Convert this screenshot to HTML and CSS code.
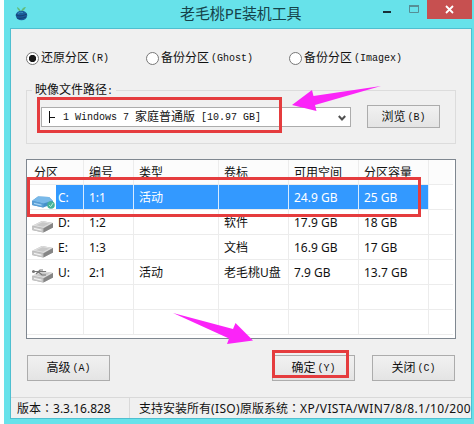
FILE: index.html
```html
<!DOCTYPE html>
<html lang="zh-CN">
<head>
<meta charset="utf-8">
<title>老毛桃PE装机工具</title>
<link rel="stylesheet" href="styles.css">
</head>
<body>
<svg class="defs" width="0" height="0">
  <defs>
    <symbol id="drive" viewBox="0 0 24 16">
      <path d="M1 8 11 3l11 2v4.500L12 14.500 1 12z" fill="#aaa"/>
      <path d="M1 7.800 11 3l11 2L12.500 10z" fill="#dedede"/>
      <path d="M5 7.200 11.500 4.200l7 1.300-6.300 3.200z" fill="#c8c8c8"/>
      <path d="M1 8 12.500 10.500v4L1 12z" fill="#c4c4c4"/>
      <path d="M3 9.800 10.500 11.500v1.200L3 11.100z" fill="#f2f2f2"/>
      <path d="M12.500 10.500 22 5v4.500l-9.500 5z" fill="#858585"/>
    </symbol>
    <symbol id="drive-sys" viewBox="0 0 24 16">
      <path d="M1 8 7 3.500l11 .5 4 4v3l-10 3.500L1 12z" fill="#4590ca"/>
      <path d="M1 7.800 7 3.500l11 .5 3.500 3.500-9 3z" fill="#79b9e9"/>
      <path d="M1 8 12.500 10.500v4L1 12z" fill="#5a9fd6"/>
      <path d="M3 9.800 10.500 11.500v1.200L3 11.100z" fill="#a8d6f5"/>
      <circle cx="20" cy="12" r="3.800" fill="#46b29a"/>
      <path d="m18.200 12.200 1.400 1.400 2.400-3.500" fill="none" stroke="#bdf0df"/>
    </symbol>
  </defs>
</svg>
<div class="window">
  <header class="titlebar">
    <svg class="logo" width="14" height="17" viewBox="0 0 14 17">
      <path d="M6 7Q5 3 2 2q0 3 4 5Q7 2 11 2 10 5 6 7z" fill="#62bd7c"/>
      <ellipse cx="6.500" cy="10.500" rx="5.700" ry="4.800" fill="#1b5d9b"/>
      <path d="M1 9.500q3 3 11-.5M2 13q4 1 9-1" fill="none" stroke="#164274" stroke-width="1.200"/>
      <path d="M3 8.500q2-2 5-1" fill="none" stroke="#3c91bf"/>
    </svg>
    <h1>老毛桃PE装机工具</h1>
    <div class="controls">
      <svg width="44" height="19" viewBox="0 0 44 19"><path d="M1 11h8v2H1z" fill="#172f38"/><path d="M27.500 5.500h9v7h-9z" fill="none" stroke="#568e95"/><path d="M27 5h10v2H27z" fill="#568e95"/></svg>
      <span class="close"><svg width="9" height="9" viewBox="0 0 9 9"><path d="m1 1 7 7M8 1 1 8" stroke="#fff" stroke-width="1.800"/></svg></span>
    </div>
  </header>
  <main class="client">
    <div class="modes">
      <label class="mode"><i class="radio on"></i>还原分区<span class="mono key">(R)</span></label>
      <label class="mode"><i class="radio"></i>备份分区<span class="mono key">(Ghost)</span></label>
      <label class="mode"><i class="radio"></i>备份分区<span class="mono key">(Imagex)</span></label>
    </div>
    <section class="group">
      <div class="legend">映像文件路径<span class="mono">:</span></div>
      <div class="combo"><span class="value"><b class="branch"></b><span class="mono">1 Windows 7 </span>家庭普通版<span class="mono"> [10.97 GB]</span></span>
        <svg class="chevron" width="8" height="7" viewBox="0 0 8 7"><path d="m.8 1 3.200 3.500L7.200 1" fill="none" stroke="#505050" stroke-width="2"/></svg></div>
      <div class="button browse">浏览<span class="mono key">(B)</span></div>
    </section>
    <div class="list">
      <div class="row head"><span>分区</span><span>编号</span><span>类型</span><span>卷标</span><span>可用空间</span><span>分区容量</span><span></span></div>
      <div class="row selected"><span><svg class="disk" width="24" height="16"><use href="#drive-sys"/></svg><em>C:</em></span><span>1:1</span><span>活动</span><span></span><span>24.9 GB</span><span>25 GB</span><span></span></div>
      <div class="row"><span><svg class="disk" width="24" height="16"><use href="#drive"/></svg><em>D:</em></span><span>1:2</span><span></span><span>软件</span><span>17.9 GB</span><span>18 GB</span><span></span></div>
      <div class="row"><span><svg class="disk" width="24" height="16"><use href="#drive"/></svg><em>E:</em></span><span>1:3</span><span></span><span>文档</span><span>16.9 GB</span><span>17 GB</span><span></span></div>
      <div class="row"><span><svg class="disk" width="24" height="16" viewBox="0 0 24 16"><use href="#drive" width="24" height="16"/><path d="M1 3.500h14M5 6l4-4h3M7 3.500 11 7h4" fill="none" stroke="#777" stroke-width="1.200"/><circle cx="2.500" cy="3.500" r="1.500" fill="#777"/></svg><em>U:</em></span><span>2:1</span><span>活动</span><span>老毛桃U盘</span><span>7.9 GB</span><span>13.7 GB</span><span></span></div>
      <div class="row"><span></span><span></span><span></span><span></span><span></span><span></span><span></span></div>
      <div class="row"><span></span><span></span><span></span><span></span><span></span><span></span><span></span></div>
    </div>
    <div class="actions">
      <div class="button">高级<span class="mono key">(A)</span></div>
      <div class="button ok">确定<span class="mono key">(Y)</span></div>
      <div class="button">关闭<span class="mono key">(C)</span></div>
    </div>
    <footer class="status"><span class="version">版本<span class="colon" lang="zh-TW">：</span>3.3.16.828</span><span class="support">支持安装所有<span class="latin">(ISO)</span>原版系统<span class="colon" lang="zh-TW">：</span><span class="latin">XP/VISTA/WIN7/8/8.1/10/200</span></span></footer>
  </main>
</div>
<svg class="marks" width="474" height="424" viewBox="0 0 474 424">
  <g fill="none" stroke="#e53c3e" stroke-width="3">
    <path d="M38.500 98.500h242v33h-242z"/>
    <path d="M28.500 178.500h391v37h-391z"/>
    <path d="M273.500 351.500h74v25h-74z"/>
  </g>
  <g fill="#fb24f8">
    <path d="M292 105 312 90 313.500 96 381 86 315 105 316.500 111z"/>
    <path d="M173 313 233 329 235.500 323 253 340.500 227 344 229 338.500z"/>
  </g>
</svg>
</body>
</html>
```

FILE: styles.css
```css
* { box-sizing: border-box; }
body {
  margin: 0;
  width: 474px;
  height: 424px;
  overflow: hidden;
  background: #fff;
  color: #111;
  font: 12px/16px "Noto Sans", "Noto Sans CJK SC", sans-serif;
}
.defs { position: absolute; }
.window {
  margin-left: 4px;
  height: 424px;
  padding: 0 2px 5px 6px;
  background: #67e2ea;
}
.titlebar { display: flex; height: 28px; }
.logo { margin: 5px 0 0 5px; flex: none; }
h1 {
  margin: 0 0 0 151px;
  width: 130px;
  font-size: 15px;
  line-height: 27px;
  font-weight: 400;
  letter-spacing: -0.1px;
  color: #15434a;
  white-space: nowrap;
}
.controls { display: flex; margin-left: auto; }
.close {
  display: flex;
  align-items: center;
  justify-content: center;
  width: 45px;
  height: 19px;
  margin-left: 1px;
  background: #c75050;
}
.client {
  display: flex;
  flex-direction: column;
  height: 391px;
  background: #f0f0f0;
  border: 1px solid #4fbfd0;
}
.mono { font: 10px/16px "Liberation Mono", monospace; white-space: pre; }
.mode .mono, .button .mono, .value .mono { margin-top: 2px; }
.key { margin-left: 2px; }
.modes { display: flex; height: 48px; padding: 21px 0 0 15px; }
.mode { display: flex; align-items: center; height: 16px; white-space: nowrap; }
.mode:nth-child(1) { width: 120px; }
.mode:nth-child(2) { width: 143px; }
.radio {
  width: 13px;
  height: 13px;
  margin-right: 2px;
  border: 1px solid #777;
  border-radius: 50%;
  background: #fff;
}
.radio.on { background: radial-gradient(circle, #181818 3.300px, #fff 4px); }
.group {
  display: flex;
  position: relative;
  margin: 13px 0 0 15px;
  width: 430px;
  height: 54px;
  padding: 14px 14px 0;
  border: 1px solid #dcdcdc;
}
.legend { position: absolute; left: 5px; top: -9px; padding: 0 3px; background: #f0f0f0; }
.combo {
  display: flex;
  align-items: center;
  justify-content: space-between;
  width: 310px;
  height: 20px;
  margin-top: 2px;
  padding: 0 4px 0 7px;
  border: 1px solid #acacac;
  background: #fff;
}
.value { display: flex; align-items: center; }
.chevron { margin-top: 2px; }
.branch {
  width: 6px;
  height: 12px;
  margin-right: 8px;
  border-left: 1px solid #111;
  background: linear-gradient(#111, #111) 0 6px / 6px 1px no-repeat;
}
.button {
  display: flex;
  align-items: center;
  justify-content: center;
  width: 83px;
  height: 26px;
  border: 1px solid #acacac;
  background: linear-gradient(#f1f1f1, #e4e4e4);
}
.browse { width: 73px; height: 23px; margin-left: auto; margin-right: 1px; }
.list {
  margin: 15px 0 0 15px;
  width: 430px;
  height: 180px;
  border: 1px solid #7f8790;
  background: #fff;
  overflow: hidden;
}
.row {
  display: grid;
  grid-template-columns: 57px 50px 85px 70px 70px 70px 24px;
  height: 25px;
}
.row span {
  display: flex;
  align-items: center;
  height: 25px;
  padding: 2px 0 0 5px;
  border-right: 1px solid #ececec;
  border-bottom: 1px solid #ececec;
  white-space: nowrap;
}
.row span:first-child { padding-left: 4px; }
.row span:last-child { border-right: 0; }
.row em { font-style: normal; margin-left: 3px; }
.disk { flex: none; margin-top: 6px; }
.head span { background: #fcfcfc; }
.row.head span:first-child { padding-left: 7px; }
.selected { color: #fff; }
.selected span:not(:last-child) { background: #3399ff; border-right-color: #d8ebff; }
.row.selected span:first-child { background: linear-gradient(90deg, #fff 29px, #3399ff 29px); }
.actions { display: flex; margin: 16px 0 0 16px; height: 26px; }
.ok { margin: 0 17px 0 162px; }
.status {
  display: flex;
  margin-top: auto;
  height: 21px;
  padding-left: 6px;
  border-top: 1px solid #d9d9d9;
  line-height: 21px;
  white-space: nowrap;
  overflow: hidden;
}
.colon { font-family: "Noto Sans CJK TC", sans-serif; line-height: 16px; }
.latin { letter-spacing: 0.35px; }
.version { width: 113px; border-right: 1px solid #d9d9d9; }
.support { margin-left: 9px; }
.marks { position: absolute; left: 0; top: 0; }
```
